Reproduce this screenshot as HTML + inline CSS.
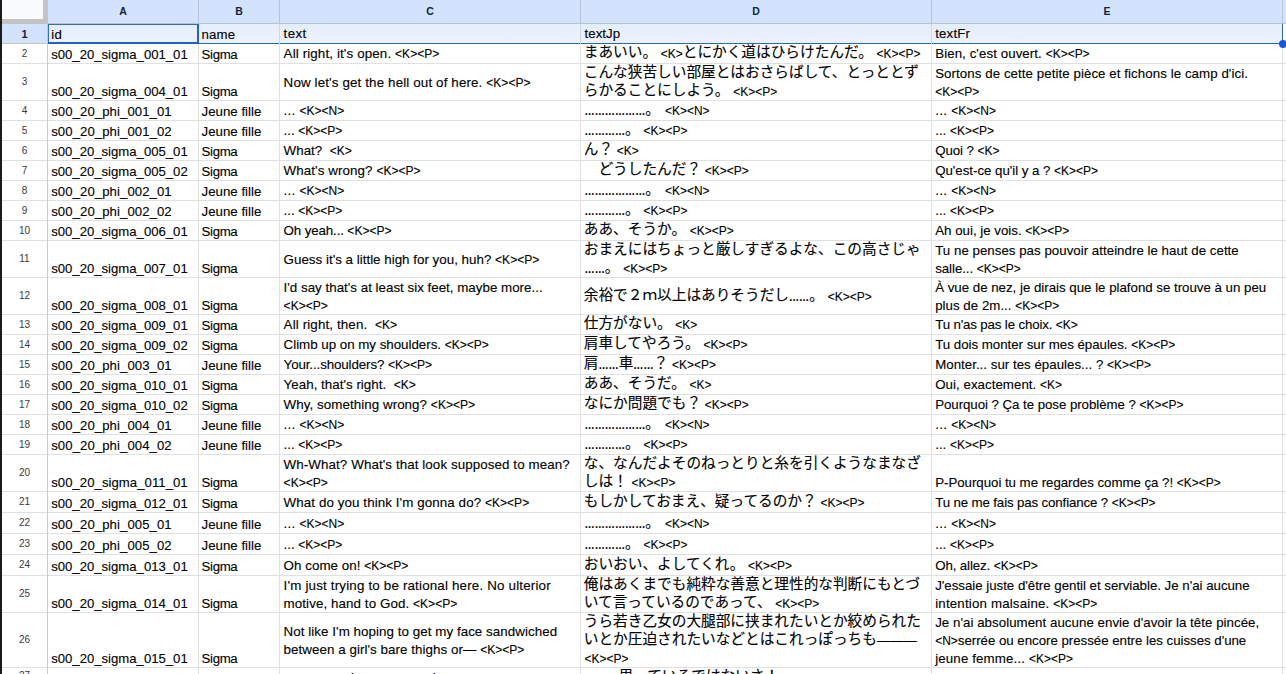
<!DOCTYPE html>
<html lang="en"><head><meta charset="utf-8"><title>Sheet</title>
<style>
html,body{margin:0;padding:0;}
body{width:1286px;height:674px;overflow:hidden;background:#fff;position:relative;
 font-family:"Liberation Sans","Noto Sans CJK JP",sans-serif;color:#000;}
#g{position:absolute;left:0;top:0;width:1286px;height:674px;overflow:hidden;}
#g div{position:absolute;white-space:pre;}
.hl{left:2px;width:1284px;height:1px;background:#e0e0e0;}
.vl{top:24px;width:1px;height:650px;background:#e0e0e0;}
.t{height:18px;line-height:18px;-webkit-text-stroke:0.12px #000;}
.j{font-family:"Noto Sans CJK JP","Liberation Sans",sans-serif;font-size:14.67px;line-height:0;letter-spacing:0;position:relative;top:-0.6px;}
.d{font-size:10.12px;font-weight:bold;letter-spacing:0;}
.k{font-size:0.902em;letter-spacing:0;}
.rn{left:2px;width:45px;text-align:center;font-size:10px;color:#3a3a3a;height:16px;line-height:16px;}
.ch{top:0;height:23px;line-height:23px;text-align:center;font-weight:bold;font-size:10.5px;color:#12233f;}
</style></head><body><div id="g">

<div style="left:0;top:0;width:2px;height:674px;background:#1b1b1b"></div>
<div style="left:48px;top:0;width:1238px;height:23px;background:#d3e3fd"></div>
<div style="left:2px;top:0;width:46px;height:24px;background:#c3c3c3"></div>
<div style="left:2px;top:0;width:41px;height:19px;background:#f9fafb"></div>
<div style="left:2px;top:24px;width:46px;height:19px;background:#d3e3fd"></div>
<div style="left:48px;top:24px;width:1235px;height:19px;background:linear-gradient(#e4eefc,#edf1fb)"></div>
<div class="hl" style="top:23px;left:48px;background:#b7c1cf"></div>
<div class="hl" style="top:43px;left:2px;width:46px;background:#c0c4cc"></div>
<div class="hl" style="top:43px;left:48px;width:1236px;background:#2b66c4"></div>
<div class="hl" style="top:63px"></div>
<div class="hl" style="top:100px"></div>
<div class="hl" style="top:120px"></div>
<div class="hl" style="top:140px"></div>
<div class="hl" style="top:160px"></div>
<div class="hl" style="top:180px"></div>
<div class="hl" style="top:200px"></div>
<div class="hl" style="top:220px"></div>
<div class="hl" style="top:240px"></div>
<div class="hl" style="top:277px"></div>
<div class="hl" style="top:314px"></div>
<div class="hl" style="top:334px"></div>
<div class="hl" style="top:354px"></div>
<div class="hl" style="top:374px"></div>
<div class="hl" style="top:394px"></div>
<div class="hl" style="top:414px"></div>
<div class="hl" style="top:434px"></div>
<div class="hl" style="top:454px"></div>
<div class="hl" style="top:491px"></div>
<div class="hl" style="top:512px"></div>
<div class="hl" style="top:533px"></div>
<div class="hl" style="top:554px"></div>
<div class="hl" style="top:575px"></div>
<div class="hl" style="top:612px"></div>
<div class="hl" style="top:667px"></div>
<div class="vl" style="left:47px;background:#c9c9c9"></div>
<div class="vl" style="left:198px"></div>
<div class="vl" style="left:198px;top:0;height:24px;background:#b9c4d4"></div>
<div class="vl" style="left:198px;top:24px;height:19px;background:#cfd8e6"></div>
<div class="vl" style="left:279px"></div>
<div class="vl" style="left:279px;top:0;height:24px;background:#b9c4d4"></div>
<div class="vl" style="left:279px;top:24px;height:19px;background:#cfd8e6"></div>
<div class="vl" style="left:580px"></div>
<div class="vl" style="left:580px;top:0;height:24px;background:#b9c4d4"></div>
<div class="vl" style="left:580px;top:24px;height:19px;background:#cfd8e6"></div>
<div class="vl" style="left:931px"></div>
<div class="vl" style="left:931px;top:0;height:24px;background:#b9c4d4"></div>
<div class="vl" style="left:931px;top:24px;height:19px;background:#cfd8e6"></div>
<div class="vl" style="left:1282px"></div>
<div class="vl" style="left:1282px;top:0;height:24px;background:#b9c4d4"></div>
<div class="vl" style="left:1282px;top:24px;height:19px;background:#cfd8e6"></div>
<div class="ch" style="left:48px;width:150px">A</div>
<div class="ch" style="left:199px;width:80px">B</div>
<div class="ch" style="left:280px;width:300px">C</div>
<div class="ch" style="left:581px;width:350px">D</div>
<div class="ch" style="left:932px;width:350px">E</div>
<div style="left:48px;top:24px;width:148px;height:17px;border:2px solid #1f62c9;border-top:1px solid #3d6fb0;border-left:1px solid #2e6bcb"></div>
<div style="left:1282px;top:24px;width:1px;height:20px;background:#2b66c4"></div>
<div style="left:1279px;top:40px;width:8px;height:8px;border-radius:50%;background:#1558d6"></div>
<div class="rn" style="top:25.5px;font-weight:bold;color:#12233f;font-size:11px;">1</div>
<div class="t" style="left:51.2px;top:26.00px;font-size:13.15px;letter-spacing:0.422px">id</div>
<div class="t" style="left:201.6px;top:26.00px;font-size:13.25px;letter-spacing:0.145px">name</div>
<div class="t" style="left:283.6px;top:25.00px;font-size:13.38px;letter-spacing:0.391px">text</div>
<div class="t" style="left:584.6px;top:25.00px;font-size:13.3px">textJp</div>
<div class="t" style="left:935.2px;top:25.00px;font-size:13.3px;letter-spacing:0.164px">textFr</div>
<div class="rn" style="top:45.5px;">2</div>
<div class="t" style="left:51.2px;top:46.00px;font-size:13.15px;letter-spacing:-0.007px">s00_20_sigma_001_01</div>
<div class="t" style="left:201.6px;top:46.00px;font-size:13.25px;letter-spacing:-0.366px">Sigma</div>
<div class="t" style="left:283.6px;top:45.00px;font-size:13.38px;letter-spacing:0.119px">All right, it&#x27;s open. <span class="k">&lt;K&gt;&lt;P&gt;</span></div>
<div class="t" style="left:583.8000000000001px;top:45.00px;font-size:13.3px;letter-spacing:-0.062px"><span class="j">まあいい。</span> <span class="k">&lt;K&gt;</span><span class="j">とにかく道はひらけたんだ。</span> <span class="k">&lt;K&gt;&lt;P&gt;</span></div>
<div class="t" style="left:935.2px;top:45.00px;font-size:13.3px;letter-spacing:0.074px">Bien, c&#x27;est ouvert. <span class="k">&lt;K&gt;&lt;P&gt;</span></div>
<div class="rn" style="top:74.0px;">3</div>
<div class="t" style="left:51.2px;top:83.00px;font-size:13.15px;letter-spacing:-0.007px">s00_20_sigma_004_01</div>
<div class="t" style="left:201.6px;top:83.00px;font-size:13.25px;letter-spacing:-0.366px">Sigma</div>
<div class="t" style="left:283.6px;top:74.00px;font-size:13.38px;letter-spacing:0.128px">Now let&#x27;s get the hell out of here. <span class="k">&lt;K&gt;&lt;P&gt;</span></div>
<div class="t" style="left:583.8000000000001px;top:65.00px;font-size:13.3px"><span class="j">こんな狭苦しい部屋とはおさらばして、とっととず</span></div>
<div class="t" style="left:583.8000000000001px;top:83.00px;font-size:13.3px;letter-spacing:0.031px"><span class="j">らかることにしよう。</span> <span class="k">&lt;K&gt;&lt;P&gt;</span></div>
<div class="t" style="left:935.2px;top:65.00px;font-size:13.3px;letter-spacing:0.064px">Sortons de cette petite pièce et fichons le camp d&#x27;ici.</div>
<div class="t" style="left:935.2px;top:83.00px;font-size:13.3px"><span class="k">&lt;K&gt;&lt;P&gt;</span></div>
<div class="rn" style="top:102.5px;">4</div>
<div class="t" style="left:51.2px;top:103.00px;font-size:13.15px;letter-spacing:0.085px">s00_20_phi_001_01</div>
<div class="t" style="left:201.6px;top:103.00px;font-size:13.25px;letter-spacing:0.007px">Jeune fille</div>
<div class="t" style="left:283.6px;top:102.00px;font-size:13.38px;letter-spacing:0.234px">... <span class="k">&lt;K&gt;&lt;N&gt;</span></div>
<div class="t" style="left:584.6px;top:102.00px;font-size:13.3px;letter-spacing:1.312px"><span class="d">………………</span><span class="j">。</span> <span class="k">&lt;K&gt;&lt;N&gt;</span></div>
<div class="t" style="left:935.2px;top:102.00px;font-size:13.3px;letter-spacing:0.316px">... <span class="k">&lt;K&gt;&lt;N&gt;</span></div>
<div class="rn" style="top:122.5px;">5</div>
<div class="t" style="left:51.2px;top:123.00px;font-size:13.15px;letter-spacing:0.085px">s00_20_phi_001_02</div>
<div class="t" style="left:201.6px;top:123.00px;font-size:13.25px;letter-spacing:0.007px">Jeune fille</div>
<div class="t" style="left:283.6px;top:122.00px;font-size:13.38px;letter-spacing:-0.07px">... <span class="k">&lt;K&gt;&lt;P&gt;</span></div>
<div class="t" style="left:584.6px;top:122.00px;font-size:13.3px;letter-spacing:0.078px"><span class="d">…………</span><span class="j">。</span> <span class="k">&lt;K&gt;&lt;P&gt;</span></div>
<div class="t" style="left:935.2px;top:122.00px;font-size:13.3px;letter-spacing:0.012px">... <span class="k">&lt;K&gt;&lt;P&gt;</span></div>
<div class="rn" style="top:142.5px;">6</div>
<div class="t" style="left:51.2px;top:143.00px;font-size:13.15px;letter-spacing:-0.007px">s00_20_sigma_005_01</div>
<div class="t" style="left:201.6px;top:143.00px;font-size:13.25px;letter-spacing:-0.366px">Sigma</div>
<div class="t" style="left:283.6px;top:142.00px;font-size:13.38px">What?  <span class="k">&lt;K&gt;</span></div>
<div class="t" style="left:583.8000000000001px;top:142.00px;font-size:13.3px;letter-spacing:-0.156px"><span class="j">ん？</span> <span class="k">&lt;K&gt;</span></div>
<div class="t" style="left:935.2px;top:142.00px;font-size:13.3px;letter-spacing:-0.083px">Quoi ? <span class="k">&lt;K&gt;</span></div>
<div class="rn" style="top:162.5px;">7</div>
<div class="t" style="left:51.2px;top:163.00px;font-size:13.15px;letter-spacing:-0.007px">s00_20_sigma_005_02</div>
<div class="t" style="left:201.6px;top:163.00px;font-size:13.25px;letter-spacing:-0.366px">Sigma</div>
<div class="t" style="left:283.6px;top:162.00px;font-size:13.38px;letter-spacing:0.073px">What&#x27;s wrong? <span class="k">&lt;K&gt;&lt;P&gt;</span></div>
<div class="t" style="left:583.8000000000001px;top:162.00px;font-size:13.3px;letter-spacing:0.031px"><span class="j">　どうしたんだ？</span> <span class="k">&lt;K&gt;&lt;P&gt;</span></div>
<div class="t" style="left:935.2px;top:162.00px;font-size:13.3px;letter-spacing:-0.035px">Qu&#x27;est-ce qu&#x27;il y a ? <span class="k">&lt;K&gt;&lt;P&gt;</span></div>
<div class="rn" style="top:182.5px;">8</div>
<div class="t" style="left:51.2px;top:183.00px;font-size:13.15px;letter-spacing:0.085px">s00_20_phi_002_01</div>
<div class="t" style="left:201.6px;top:183.00px;font-size:13.25px;letter-spacing:0.007px">Jeune fille</div>
<div class="t" style="left:283.6px;top:182.00px;font-size:13.38px;letter-spacing:0.234px">... <span class="k">&lt;K&gt;&lt;N&gt;</span></div>
<div class="t" style="left:584.6px;top:182.00px;font-size:13.3px;letter-spacing:1.312px"><span class="d">………………</span><span class="j">。</span> <span class="k">&lt;K&gt;&lt;N&gt;</span></div>
<div class="t" style="left:935.2px;top:182.00px;font-size:13.3px;letter-spacing:0.316px">... <span class="k">&lt;K&gt;&lt;N&gt;</span></div>
<div class="rn" style="top:202.5px;">9</div>
<div class="t" style="left:51.2px;top:203.00px;font-size:13.15px;letter-spacing:0.085px">s00_20_phi_002_02</div>
<div class="t" style="left:201.6px;top:203.00px;font-size:13.25px;letter-spacing:0.007px">Jeune fille</div>
<div class="t" style="left:283.6px;top:202.00px;font-size:13.38px;letter-spacing:-0.07px">... <span class="k">&lt;K&gt;&lt;P&gt;</span></div>
<div class="t" style="left:584.6px;top:202.00px;font-size:13.3px;letter-spacing:0.078px"><span class="d">…………</span><span class="j">。</span> <span class="k">&lt;K&gt;&lt;P&gt;</span></div>
<div class="t" style="left:935.2px;top:202.00px;font-size:13.3px;letter-spacing:0.012px">... <span class="k">&lt;K&gt;&lt;P&gt;</span></div>
<div class="rn" style="top:222.5px;">10</div>
<div class="t" style="left:51.2px;top:223.00px;font-size:13.15px;letter-spacing:-0.007px">s00_20_sigma_006_01</div>
<div class="t" style="left:201.6px;top:223.00px;font-size:13.25px;letter-spacing:-0.366px">Sigma</div>
<div class="t" style="left:283.6px;top:222.00px;font-size:13.38px;letter-spacing:-0.151px">Oh yeah... <span class="k">&lt;K&gt;&lt;P&gt;</span></div>
<div class="t" style="left:583.8000000000001px;top:222.00px;font-size:13.3px;letter-spacing:0.031px"><span class="j">ああ、そうか。</span> <span class="k">&lt;K&gt;&lt;P&gt;</span></div>
<div class="t" style="left:935.2px;top:222.00px;font-size:13.3px">Ah oui, je vois. <span class="k">&lt;K&gt;&lt;P&gt;</span></div>
<div class="rn" style="top:251.0px;">11</div>
<div class="t" style="left:51.2px;top:260.00px;font-size:13.15px;letter-spacing:-0.007px">s00_20_sigma_007_01</div>
<div class="t" style="left:201.6px;top:260.00px;font-size:13.25px;letter-spacing:-0.366px">Sigma</div>
<div class="t" style="left:283.6px;top:251.00px;font-size:13.38px">Guess it&#x27;s a little high for you, huh? <span class="k">&lt;K&gt;&lt;P&gt;</span></div>
<div class="t" style="left:583.8000000000001px;top:242.00px;font-size:13.3px"><span class="j">おまえにはちょっと厳しすぎるよな、この高さじゃ</span></div>
<div class="t" style="left:584.6px;top:260.00px;font-size:13.3px;letter-spacing:0.062px"><span class="d">……</span><span class="j">。</span> <span class="k">&lt;K&gt;&lt;P&gt;</span></div>
<div class="t" style="left:935.2px;top:242.00px;font-size:13.3px;letter-spacing:0.019px">Tu ne penses pas pouvoir atteindre le haut de cette</div>
<div class="t" style="left:935.2px;top:260.00px;font-size:13.3px;letter-spacing:-0.059px">salle... <span class="k">&lt;K&gt;&lt;P&gt;</span></div>
<div class="rn" style="top:288.0px;">12</div>
<div class="t" style="left:51.2px;top:297.00px;font-size:13.15px;letter-spacing:-0.007px">s00_20_sigma_008_01</div>
<div class="t" style="left:201.6px;top:297.00px;font-size:13.25px;letter-spacing:-0.366px">Sigma</div>
<div class="t" style="left:283.6px;top:279.00px;font-size:13.38px;letter-spacing:-0.007px">I&#x27;d say that&#x27;s at least six feet, maybe more...</div>
<div class="t" style="left:283.6px;top:297.00px;font-size:13.38px"><span class="k">&lt;K&gt;&lt;P&gt;</span></div>
<div class="t" style="left:583.8000000000001px;top:288.00px;font-size:13.3px;letter-spacing:0.062px"><span class="j">余裕で２ｍ以上はありそうだし</span><span class="d">……</span><span class="j">。</span> <span class="k">&lt;K&gt;&lt;P&gt;</span></div>
<div class="t" style="left:935.2px;top:279.00px;font-size:13.3px;letter-spacing:-0.016px">À vue de nez, je dirais que le plafond se trouve à un peu</div>
<div class="t" style="left:935.2px;top:297.00px;font-size:13.3px;letter-spacing:0.018px">plus de 2m... <span class="k">&lt;K&gt;&lt;P&gt;</span></div>
<div class="rn" style="top:316.5px;">13</div>
<div class="t" style="left:51.2px;top:317.00px;font-size:13.15px;letter-spacing:-0.007px">s00_20_sigma_009_01</div>
<div class="t" style="left:201.6px;top:317.00px;font-size:13.25px;letter-spacing:-0.366px">Sigma</div>
<div class="t" style="left:283.6px;top:316.00px;font-size:13.38px;letter-spacing:0.12px">All right, then.  <span class="k">&lt;K&gt;</span></div>
<div class="t" style="left:583.8000000000001px;top:316.00px;font-size:13.3px;letter-spacing:-0.156px"><span class="j">仕方がない。</span> <span class="k">&lt;K&gt;</span></div>
<div class="t" style="left:935.2px;top:316.00px;font-size:13.3px;letter-spacing:-0.156px">Tu n&#x27;as pas le choix. <span class="k">&lt;K&gt;</span></div>
<div class="rn" style="top:336.5px;">14</div>
<div class="t" style="left:51.2px;top:337.00px;font-size:13.15px;letter-spacing:-0.007px">s00_20_sigma_009_02</div>
<div class="t" style="left:201.6px;top:337.00px;font-size:13.25px;letter-spacing:-0.366px">Sigma</div>
<div class="t" style="left:283.6px;top:336.00px;font-size:13.38px;letter-spacing:-0.037px">Climb up on my shoulders. <span class="k">&lt;K&gt;&lt;P&gt;</span></div>
<div class="t" style="left:583.8000000000001px;top:336.00px;font-size:13.3px;letter-spacing:0.031px"><span class="j">肩車してやろう。</span> <span class="k">&lt;K&gt;&lt;P&gt;</span></div>
<div class="t" style="left:935.2px;top:336.00px;font-size:13.3px;letter-spacing:-0.027px">Tu dois monter sur mes épaules. <span class="k">&lt;K&gt;&lt;P&gt;</span></div>
<div class="rn" style="top:356.5px;">15</div>
<div class="t" style="left:51.2px;top:357.00px;font-size:13.15px;letter-spacing:0.085px">s00_20_phi_003_01</div>
<div class="t" style="left:201.6px;top:357.00px;font-size:13.25px;letter-spacing:0.007px">Jeune fille</div>
<div class="t" style="left:283.6px;top:356.00px;font-size:13.38px;letter-spacing:-0.128px">Your...shoulders? <span class="k">&lt;K&gt;&lt;P&gt;</span></div>
<div class="t" style="left:583.8000000000001px;top:356.00px;font-size:13.3px;letter-spacing:0.094px"><span class="j">肩</span><span class="d">……</span><span class="j">車</span><span class="d">……</span><span class="j">？</span> <span class="k">&lt;K&gt;&lt;P&gt;</span></div>
<div class="t" style="left:935.2px;top:356.00px;font-size:13.3px;letter-spacing:0.013px">Monter... sur tes épaules... ? <span class="k">&lt;K&gt;&lt;P&gt;</span></div>
<div class="rn" style="top:376.5px;">16</div>
<div class="t" style="left:51.2px;top:377.00px;font-size:13.15px;letter-spacing:-0.007px">s00_20_sigma_010_01</div>
<div class="t" style="left:201.6px;top:377.00px;font-size:13.25px;letter-spacing:-0.366px">Sigma</div>
<div class="t" style="left:283.6px;top:376.00px;font-size:13.38px;letter-spacing:0.008px">Yeah, that&#x27;s right.  <span class="k">&lt;K&gt;</span></div>
<div class="t" style="left:583.8000000000001px;top:376.00px;font-size:13.3px;letter-spacing:-0.156px"><span class="j">ああ、そうだ。</span> <span class="k">&lt;K&gt;</span></div>
<div class="t" style="left:935.2px;top:376.00px;font-size:13.3px;letter-spacing:0.038px">Oui, exactement. <span class="k">&lt;K&gt;</span></div>
<div class="rn" style="top:396.5px;">17</div>
<div class="t" style="left:51.2px;top:397.00px;font-size:13.15px;letter-spacing:-0.007px">s00_20_sigma_010_02</div>
<div class="t" style="left:201.6px;top:397.00px;font-size:13.25px;letter-spacing:-0.366px">Sigma</div>
<div class="t" style="left:283.6px;top:396.00px;font-size:13.38px;letter-spacing:0.048px">Why, something wrong? <span class="k">&lt;K&gt;&lt;P&gt;</span></div>
<div class="t" style="left:583.8000000000001px;top:396.00px;font-size:13.3px;letter-spacing:0.031px"><span class="j">なにか問題でも？</span> <span class="k">&lt;K&gt;&lt;P&gt;</span></div>
<div class="t" style="left:935.2px;top:396.00px;font-size:13.3px;letter-spacing:-0.059px">Pourquoi ? Ça te pose problème ? <span class="k">&lt;K&gt;&lt;P&gt;</span></div>
<div class="rn" style="top:416.5px;">18</div>
<div class="t" style="left:51.2px;top:417.00px;font-size:13.15px;letter-spacing:0.085px">s00_20_phi_004_01</div>
<div class="t" style="left:201.6px;top:417.00px;font-size:13.25px;letter-spacing:0.007px">Jeune fille</div>
<div class="t" style="left:283.6px;top:416.00px;font-size:13.38px;letter-spacing:0.234px">... <span class="k">&lt;K&gt;&lt;N&gt;</span></div>
<div class="t" style="left:584.6px;top:416.00px;font-size:13.3px;letter-spacing:1.312px"><span class="d">………………</span><span class="j">。</span> <span class="k">&lt;K&gt;&lt;N&gt;</span></div>
<div class="t" style="left:935.2px;top:416.00px;font-size:13.3px;letter-spacing:0.316px">... <span class="k">&lt;K&gt;&lt;N&gt;</span></div>
<div class="rn" style="top:436.5px;">19</div>
<div class="t" style="left:51.2px;top:437.00px;font-size:13.15px;letter-spacing:0.085px">s00_20_phi_004_02</div>
<div class="t" style="left:201.6px;top:437.00px;font-size:13.25px;letter-spacing:0.007px">Jeune fille</div>
<div class="t" style="left:283.6px;top:436.00px;font-size:13.38px;letter-spacing:-0.07px">... <span class="k">&lt;K&gt;&lt;P&gt;</span></div>
<div class="t" style="left:584.6px;top:436.00px;font-size:13.3px;letter-spacing:0.078px"><span class="d">…………</span><span class="j">。</span> <span class="k">&lt;K&gt;&lt;P&gt;</span></div>
<div class="t" style="left:935.2px;top:436.00px;font-size:13.3px;letter-spacing:0.012px">... <span class="k">&lt;K&gt;&lt;P&gt;</span></div>
<div class="rn" style="top:465.0px;">20</div>
<div class="t" style="left:51.2px;top:474.00px;font-size:13.15px;letter-spacing:0.045px">s00_20_sigma_011_01</div>
<div class="t" style="left:201.6px;top:474.00px;font-size:13.25px;letter-spacing:-0.366px">Sigma</div>
<div class="t" style="left:283.6px;top:456.00px;font-size:13.38px;letter-spacing:0.077px">Wh-What? What&#x27;s that look supposed to mean?</div>
<div class="t" style="left:283.6px;top:474.00px;font-size:13.38px"><span class="k">&lt;K&gt;&lt;P&gt;</span></div>
<div class="t" style="left:583.8000000000001px;top:456.00px;font-size:13.3px"><span class="j">な、なんだよそのねっとりと糸を引くようなまなざ</span></div>
<div class="t" style="left:583.8000000000001px;top:474.00px;font-size:13.3px;letter-spacing:0.031px"><span class="j">しは！</span> <span class="k">&lt;K&gt;&lt;P&gt;</span></div>
<div class="t" style="left:935.2px;top:474.00px;font-size:13.3px;letter-spacing:-0.041px">P-Pourquoi tu me regardes comme ça ?! <span class="k">&lt;K&gt;&lt;P&gt;</span></div>
<div class="rn" style="top:494.0px;">21</div>
<div class="t" style="left:51.2px;top:495.00px;font-size:13.15px;letter-spacing:-0.007px">s00_20_sigma_012_01</div>
<div class="t" style="left:201.6px;top:495.00px;font-size:13.25px;letter-spacing:-0.366px">Sigma</div>
<div class="t" style="left:283.6px;top:494.00px;font-size:13.38px;letter-spacing:0.079px">What do you think I&#x27;m gonna do? <span class="k">&lt;K&gt;&lt;P&gt;</span></div>
<div class="t" style="left:583.8000000000001px;top:494.00px;font-size:13.3px;letter-spacing:0.031px"><span class="j">もしかしておまえ、疑ってるのか？</span> <span class="k">&lt;K&gt;&lt;P&gt;</span></div>
<div class="t" style="left:935.2px;top:494.00px;font-size:13.3px;letter-spacing:-0.138px">Tu ne me fais pas confiance ? <span class="k">&lt;K&gt;&lt;P&gt;</span></div>
<div class="rn" style="top:515.0px;">22</div>
<div class="t" style="left:51.2px;top:516.00px;font-size:13.15px;letter-spacing:0.085px">s00_20_phi_005_01</div>
<div class="t" style="left:201.6px;top:516.00px;font-size:13.25px;letter-spacing:0.007px">Jeune fille</div>
<div class="t" style="left:283.6px;top:515.00px;font-size:13.38px;letter-spacing:0.234px">... <span class="k">&lt;K&gt;&lt;N&gt;</span></div>
<div class="t" style="left:584.6px;top:515.00px;font-size:13.3px;letter-spacing:1.312px"><span class="d">………………</span><span class="j">。</span> <span class="k">&lt;K&gt;&lt;N&gt;</span></div>
<div class="t" style="left:935.2px;top:515.00px;font-size:13.3px;letter-spacing:0.316px">... <span class="k">&lt;K&gt;&lt;N&gt;</span></div>
<div class="rn" style="top:536.0px;">23</div>
<div class="t" style="left:51.2px;top:537.00px;font-size:13.15px;letter-spacing:0.085px">s00_20_phi_005_02</div>
<div class="t" style="left:201.6px;top:537.00px;font-size:13.25px;letter-spacing:0.007px">Jeune fille</div>
<div class="t" style="left:283.6px;top:536.00px;font-size:13.38px;letter-spacing:-0.07px">... <span class="k">&lt;K&gt;&lt;P&gt;</span></div>
<div class="t" style="left:584.6px;top:536.00px;font-size:13.3px;letter-spacing:0.078px"><span class="d">…………</span><span class="j">。</span> <span class="k">&lt;K&gt;&lt;P&gt;</span></div>
<div class="t" style="left:935.2px;top:536.00px;font-size:13.3px;letter-spacing:0.012px">... <span class="k">&lt;K&gt;&lt;P&gt;</span></div>
<div class="rn" style="top:557.0px;">24</div>
<div class="t" style="left:51.2px;top:558.00px;font-size:13.15px;letter-spacing:-0.007px">s00_20_sigma_013_01</div>
<div class="t" style="left:201.6px;top:558.00px;font-size:13.25px;letter-spacing:-0.366px">Sigma</div>
<div class="t" style="left:283.6px;top:557.00px;font-size:13.38px;letter-spacing:0.02px">Oh come on! <span class="k">&lt;K&gt;&lt;P&gt;</span></div>
<div class="t" style="left:583.8000000000001px;top:557.00px;font-size:13.3px;letter-spacing:0.031px"><span class="j">おいおい、よしてくれ。</span> <span class="k">&lt;K&gt;&lt;P&gt;</span></div>
<div class="t" style="left:935.2px;top:557.00px;font-size:13.3px;letter-spacing:-0.126px">Oh, allez. <span class="k">&lt;K&gt;&lt;P&gt;</span></div>
<div class="rn" style="top:586.0px;">25</div>
<div class="t" style="left:51.2px;top:595.00px;font-size:13.15px;letter-spacing:-0.007px">s00_20_sigma_014_01</div>
<div class="t" style="left:201.6px;top:595.00px;font-size:13.25px;letter-spacing:-0.366px">Sigma</div>
<div class="t" style="left:283.6px;top:577.00px;font-size:13.38px;letter-spacing:0.17px">I&#x27;m just trying to be rational here. No ulterior</div>
<div class="t" style="left:283.6px;top:595.00px;font-size:13.38px;letter-spacing:0.074px">motive, hand to God. <span class="k">&lt;K&gt;&lt;P&gt;</span></div>
<div class="t" style="left:583.8000000000001px;top:577.00px;font-size:13.3px"><span class="j">俺はあくまでも純粋な善意と理性的な判断にもとづ</span></div>
<div class="t" style="left:583.8000000000001px;top:595.00px;font-size:13.3px;letter-spacing:0.031px"><span class="j">いて言っているのであって、</span> <span class="k">&lt;K&gt;&lt;P&gt;</span></div>
<div class="t" style="left:935.2px;top:577.00px;font-size:13.3px;letter-spacing:-0.025px">J&#x27;essaie juste d&#x27;être gentil et serviable. Je n&#x27;ai aucune</div>
<div class="t" style="left:935.2px;top:595.00px;font-size:13.3px;letter-spacing:0.175px">intention malsaine. <span class="k">&lt;K&gt;&lt;P&gt;</span></div>
<div class="rn" style="top:632.0px;">26</div>
<div class="t" style="left:51.2px;top:650.00px;font-size:13.15px;letter-spacing:-0.007px">s00_20_sigma_015_01</div>
<div class="t" style="left:201.6px;top:650.00px;font-size:13.25px;letter-spacing:-0.366px">Sigma</div>
<div class="t" style="left:283.6px;top:623.00px;font-size:13.38px;letter-spacing:0.042px">Not like I&#x27;m hoping to get my face sandwiched</div>
<div class="t" style="left:283.6px;top:641.00px;font-size:13.38px;letter-spacing:0.045px">between a girl&#x27;s bare thighs or— <span class="k">&lt;K&gt;&lt;P&gt;</span></div>
<div class="t" style="left:583.8000000000001px;top:614.00px;font-size:13.3px"><span class="j">うら若き乙女の大腿部に挟まれたいとか絞められた</span></div>
<div class="t" style="left:583.8000000000001px;top:632.00px;font-size:13.3px;letter-spacing:-0.026px"><span class="j">いとか圧迫されたいなどとはこれっぽっちも</span>———</div>
<div class="t" style="left:584.6px;top:650.00px;font-size:13.3px"><span class="k">&lt;K&gt;&lt;P&gt;</span></div>
<div class="t" style="left:935.2px;top:614.00px;font-size:13.3px;letter-spacing:0.034px">Je n&#x27;ai absolument aucune envie d&#x27;avoir la tête pincée,</div>
<div class="t" style="left:935.2px;top:632.00px;font-size:13.3px;letter-spacing:-0.035px"><span class="k">&lt;N&gt;</span>serrée ou encore pressée entre les cuisses d&#x27;une</div>
<div class="t" style="left:935.2px;top:650.00px;font-size:13.3px;letter-spacing:0.139px">jeune femme... <span class="k">&lt;K&gt;&lt;P&gt;</span></div>
<div class="rn" style="top:668.0px;">27</div>
<div class="t" style="left:51.2px;top:670.00px;font-size:13.15px;letter-spacing:-0.007px">s00_20_sigma_016_01</div>
<div class="t" style="left:201.6px;top:670.00px;font-size:13.25px;letter-spacing:-0.366px">Sigma</div>
<div class="t" style="left:283.6px;top:669.00px;font-size:13.38px;letter-spacing:-0.101px">as you can hear, my own bones are so sore now...</div>
<div class="t" style="left:583.8000000000001px;top:669.00px;font-size:13.3px"><span class="j">　</span><span class="d">……</span><span class="j">思っているではないさ！</span></div>
</div></body></html>
